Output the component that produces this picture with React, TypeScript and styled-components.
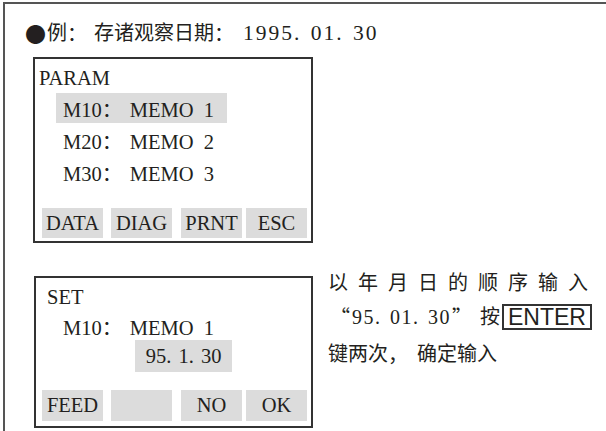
import React from "react";
import styled, { createGlobalStyle } from "styled-components";

const Global = createGlobalStyle`
  html, body { margin: 0; padding: 0; background: #fff; overflow: hidden; }
  body {
    font-family: "Liberation Serif", "Noto Sans CJK SC", serif;
    color: #231f20;
  }
`;

const INK = "#231f20";
const GRAY = "#dcdcdc";

const Frame = styled.div`
  margin: 2px 0 0 3px;
  width: 603px;
  height: 429px;
  box-sizing: border-box;
  border-top: 2px solid #555;
  border-left: 2px solid #555;
  display: flex;
  flex-direction: column;
  align-items: flex-start;
  overflow: hidden;
`;

const Heading = styled.div`
  margin: 14px 0 0 21px;
  height: 30px;
  line-height: 30px;
  font-size: 20px;
  display: flex;
  align-items: center;
  white-space: nowrap;
`;

const Bullet = styled.span`
  display: inline-block;
  width: 22px;
  font-family: "Noto Sans CJK SC", sans-serif;
  font-size: 21px;
  margin-left: -1px;
`;

const Punct = styled.span<{ $w?: number }>`
  display: inline-block;
  width: ${(p) => p.$w ?? 28}px;
  font-family: "Noto Sans CJK SC", sans-serif;
  text-align: left;
  letter-spacing: 0;
`;

const Panel = styled.div<{ $top: number; $left: number; $width: number; $padBottom: number }>`
  margin-top: ${(p) => p.$top}px;
  margin-left: ${(p) => p.$left}px;
  width: ${(p) => p.$width}px;
  box-sizing: border-box;
  border: 2px solid #333;
  padding: 4px 0 ${(p) => p.$padBottom}px 0;
  font-size: 20.5px;
  display: flex;
  flex-direction: column;
  align-items: flex-start;
  flex-shrink: 0;
`;

const Title = styled.div<{ $indent: number }>`
  height: 30px;
  line-height: 30px;
  padding-left: ${(p) => p.$indent}px;
`;

const MenuRow = styled.div<{ $active?: boolean; $first?: boolean }>`
  margin-top: ${(p) => (p.$first ? 0 : 2)}px;
  margin-left: 21px;
  width: 171px;
  height: 30px;
  line-height: 30px;
  padding-left: 7px;
  box-sizing: border-box;
  background: ${(p) => (p.$active ? GRAY : "transparent")};
  white-space: nowrap;
`;

const EntryRow = styled.div`
  height: 28px;
  line-height: 28px;
  padding-left: 27px;
  white-space: nowrap;
`;

const DateBox = styled.div`
  margin-left: 99px;
  width: 97px;
  height: 32px;
  line-height: 32px;
  text-align: center;
  background: ${GRAY};
  word-spacing: 2px;
`;

const SoftKeys = styled.div<{ $top: number; $indent: number }>`
  margin-top: ${(p) => p.$top}px;
  padding-left: ${(p) => p.$indent}px;
  display: flex;
`;

const SoftKey = styled.div<{ $gap: number; $h: number }>`
  margin-left: ${(p) => p.$gap}px;
  width: 61px;
  height: ${(p) => p.$h}px;
  line-height: ${(p) => p.$h}px;
  text-align: center;
  background: ${GRAY};
  white-space: nowrap;
`;

const Lower = styled.div`
  margin-top: 23px;
  display: flex;
  align-items: flex-start;
`;

const Side = styled.div`
  margin-left: 15px;
  font-size: 20px;
  line-height: 34px;
  white-space: nowrap;
`;

const Line = styled.div<{ $spacing?: number; $top?: number }>`
  height: 34px;
  margin-top: ${(p) => p.$top ?? 0}px;
  letter-spacing: ${(p) => p.$spacing ?? 0}px;
  display: flex;
  align-items: center;
`;

const Quote = styled.span<{ $before?: number; $after?: number }>`
  display: inline-block;
  font-family: "Noto Sans CJK SC", sans-serif;
  margin-left: ${(p) => p.$before ?? 0}px;
  margin-right: ${(p) => p.$after ?? 0}px;
`;

const Num = styled.span<{ $spacing: number; $size?: number }>`
  font-size: ${(p) => (p.$size ? `${p.$size}px` : "inherit")};
  letter-spacing: ${(p) => p.$spacing}px;
  word-spacing: 2px;
`;

const EnterKey = styled.span`
  margin-left: 2px;
  display: inline-block;
  border: 2px solid #333;
  font-family: "Liberation Sans", sans-serif;
  font-size: 23px;
  line-height: 22px;
  padding: 0 4px;
  color: ${INK};
`;

const menu = [
  { id: "M10", name: "MEMO", n: 1 },
  { id: "M20", name: "MEMO", n: 2 },
  { id: "M30", name: "MEMO", n: 3 },
];

const gaps = [0, 8, 9, 4];

export default function App() {
  return (
    <>
      <Global />
      <Frame>
        <Heading>
          <Bullet>●</Bullet>例<Punct $w={27}>：</Punct>存诸观察日期<Punct $w={29}>：</Punct>
          <Num $spacing={2} $size={21.5}>1995. 01. 30</Num>
        </Heading>

        <Panel $top={9} $left={28} $width={280} $padBottom={3}>
          <Title $indent={4}>PARAM</Title>
          {menu.map((m, i) => (
            <MenuRow key={m.id} $active={i === 0} $first={i === 0}>
              {m.id}
              <Punct>：</Punct>
              {m.name}&nbsp;&nbsp;{m.n}
            </MenuRow>
          ))}
          <SoftKeys $top={21} $indent={7}>
            {["DATA", "DIAG", "PRNT", "ESC"].map((k, i) => (
              <SoftKey key={k} $gap={gaps[i]} $h={30}>
                {k}
              </SoftKey>
            ))}
          </SoftKeys>
        </Panel>

        <Lower>
          <Panel $top={10} $left={29} $width={279} $padBottom={5}>
            <Title $indent={11}>SET</Title>
            <EntryRow>
              M10<Punct>：</Punct>MEMO&nbsp;&nbsp;1
            </EntryRow>
            <DateBox>95. 1. 30</DateBox>
            <SoftKeys $top={18} $indent={6}>
              {["FEED", "", "NO", "OK"].map((k, i) => (
                <SoftKey key={i} $gap={gaps[i]} $h={31}>
                  {k}
                </SoftKey>
              ))}
            </SoftKeys>
          </Panel>
          <Side>
            <Line $spacing={10}>以年月日的顺序输入</Line>
            <Line>
              <Quote $before={2} $after={2}>“</Quote>
              <Num $spacing={1.5}>95. 01. 30</Num>
              <Quote $before={1} $after={8}>”</Quote>按<EnterKey>ENTER</EnterKey>
            </Line>
            <Line $top={3}>
              键两次<Punct $w={29}>，</Punct>确定输入
            </Line>
          </Side>
        </Lower>
      </Frame>
    </>
  );
}
